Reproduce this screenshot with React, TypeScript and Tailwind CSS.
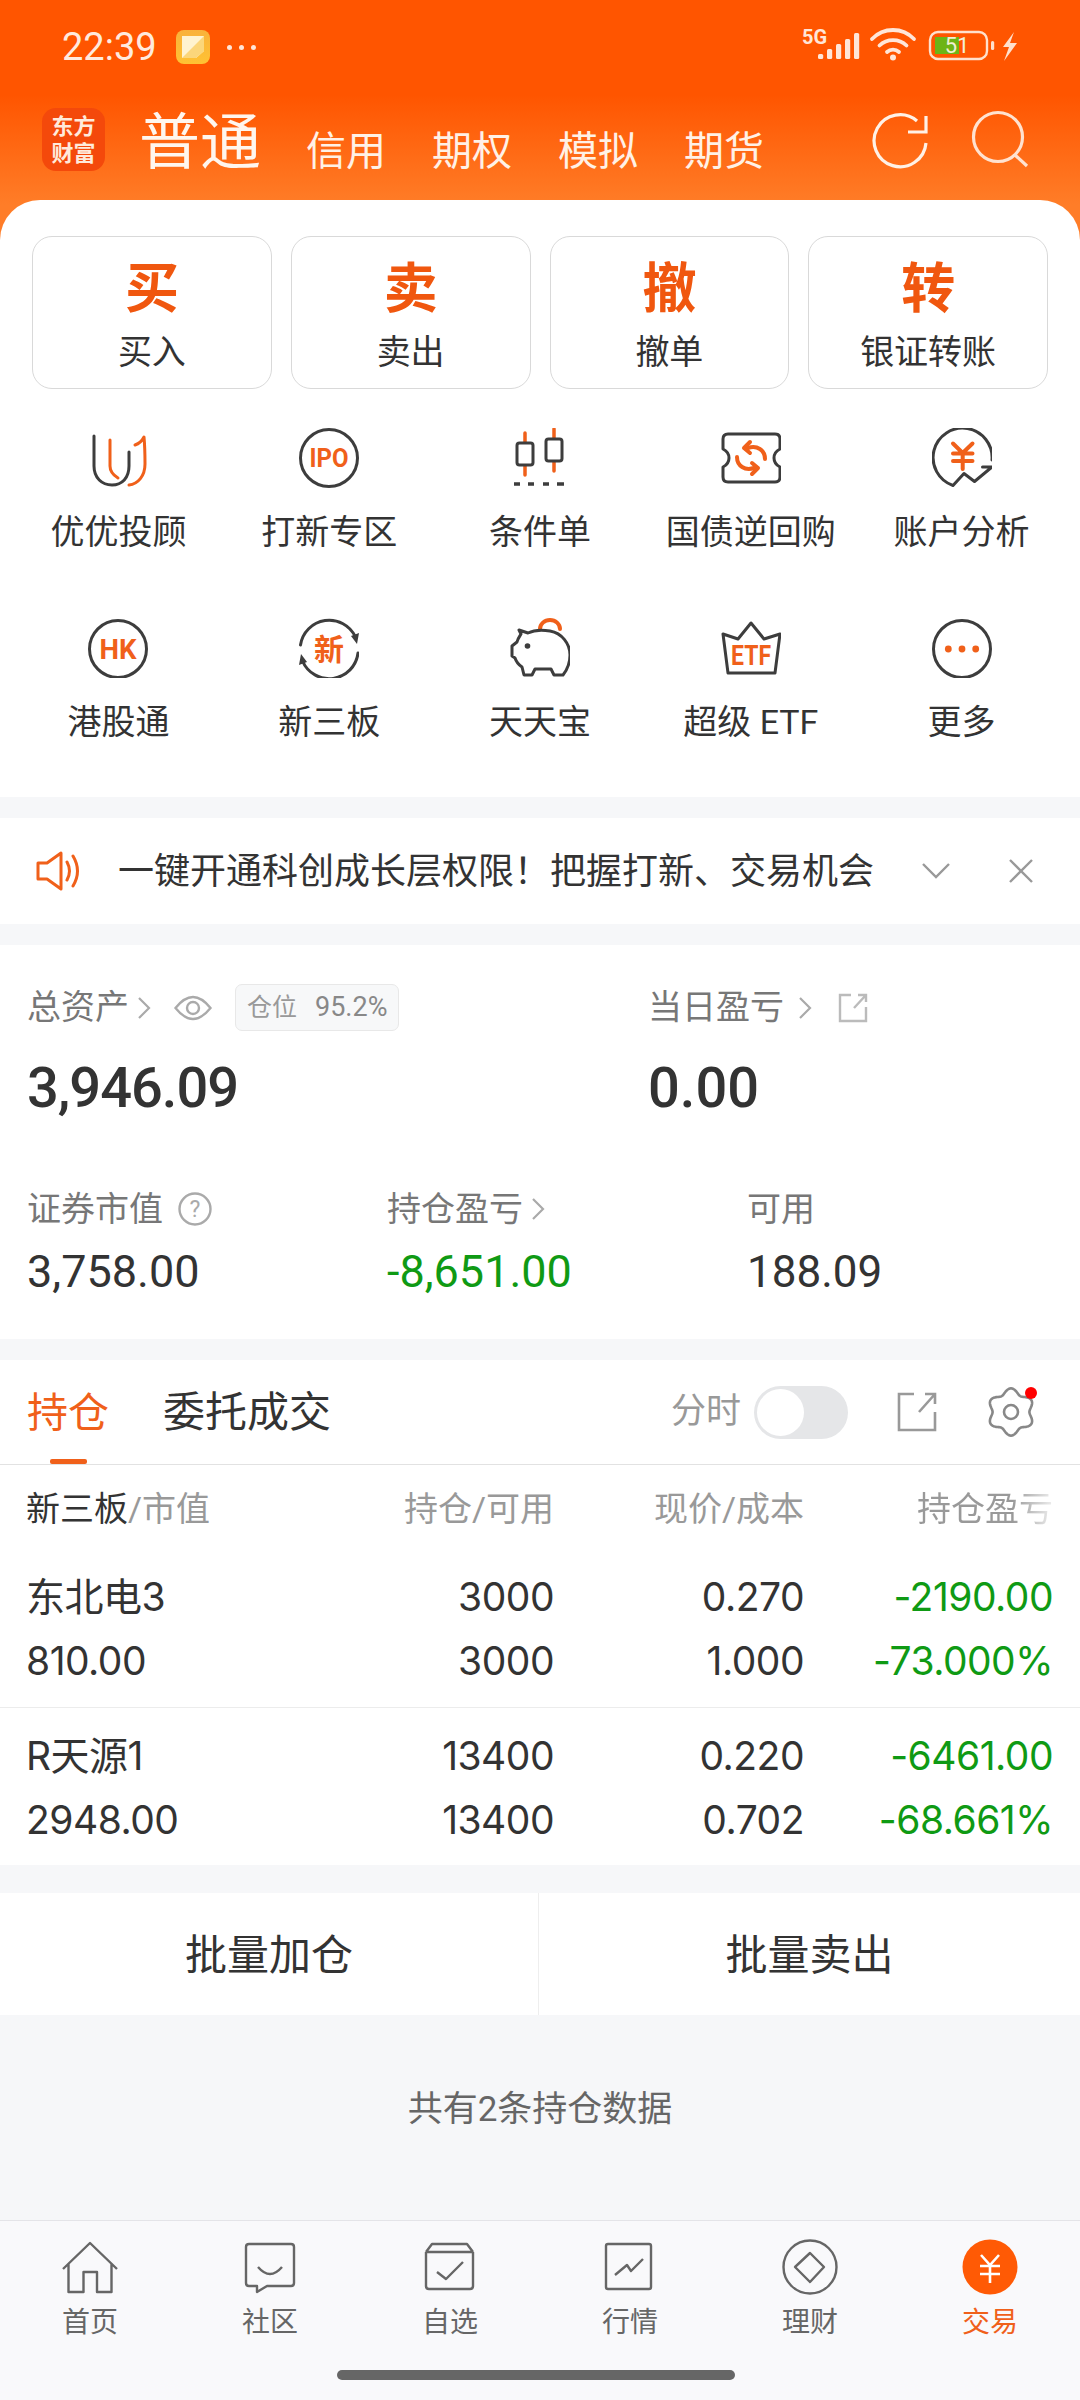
import React from "react";

const DK = "#3d3d3d";
const OR = "#f0601a";

function StatusIcons() {
  return (
    <svg width="220" height="44" viewBox="0 -4 220 44" fill="none">
      <text x="2" y="17" fontSize="20" fontWeight="700" fontFamily="Roboto" fill="#ffe6d8">5G</text>
      {[[18, 27], [27, 22], [36, 17], [45, 12], [54, 6]].map(([x, y]) => (
        <rect key={x} x={x} y={y} width="5.2" height={32 - y} rx="1.5" fill="#ffe6d8" />
      ))}
      <g stroke="#ffe6d8" strokeWidth="3.8" strokeLinecap="round">
        <path d="M72 12 A29 29 0 0 1 114 12" />
        <path d="M79.5 18.5 A19.5 19.5 0 0 1 106.5 18.5" />
        <path d="M87 25 A9 9 0 0 1 99 25" />
      </g>
      <circle cx="93" cy="30.5" r="3" fill="#ffe6d8" />
      <rect x="130" y="5" width="57" height="27" rx="8" stroke="#ffe0cc" strokeWidth="2.4" />
      <rect x="135" y="10" width="24" height="17" fill="#6db416" />
      <rect x="191" y="14" width="3.2" height="9" rx="1.5" fill="#ffe0cc" />
      <text x="157" y="26" fontSize="22" textAnchor="middle" fontFamily="Roboto" fill="#f2f0d4">51</text>
      <path d="M214 5 L203 20 L209 20 L204 34 L217 16 L210 16 Z" fill="#ffe0cc" />
    </svg>
  );
}

function Refresh() {
  return (
    <svg width="60" height="60" viewBox="0 0 60 60" fill="none" stroke="#fff1e6" strokeWidth="3.2">
      <path d="M56 33 A26 26 0 1 1 47 11" />
      <path d="M56 6 V22 H38" />
    </svg>
  );
}
function Search() {
  return (
    <svg width="60" height="60" viewBox="0 0 60 60" fill="none" stroke="#ffe2d0" strokeWidth="3.2">
      <circle cx="28" cy="27" r="24.5" />
      <path d="M45 45 L57 56" />
    </svg>
  );
}

const svgProps = { width: 60, height: 60, viewBox: "0 0 60 60", fill: "none", strokeLinecap: "round" as const, strokeLinejoin: "round" as const, strokeWidth: 3 };

function IconText({ x, y, size, w, children, family = "Roboto" }: { x: number; y: number; size: number; w?: number; children: string; family?: string }) {
  return (
    <text x={x} y={y} fontSize={size} fontWeight="700" fontFamily={family} textAnchor="middle" fill={OR} stroke="none" textLength={w} lengthAdjust={w ? "spacingAndGlyphs" : undefined}>
      {children}
    </text>
  );
}

const tiles: [string, React.ReactNode][] = [
  ["优优投顾", <svg {...svgProps}><path d="M6 8 V38 C6 50 14 57 24 57 C34 57 41 50 41 38 V24" stroke={DK} /><path d="M22 12 V38 C22 43 25 47 30 50 M47 17 C50 16 54 13 56 9 C57 20 57 28 57 36 C57 48 50 56 41 57" stroke={OR} /></svg>],
  ["打新专区", <svg {...svgProps}><circle cx="30" cy="30" r="28.5" stroke={DK} /><IconText x={30} y={39} size={25} w={39}>IPO</IconText></svg>],
  ["条件单", <svg {...svgProps}><path d="M15 5 V47 M44 1 V43" stroke={OR} strokeWidth="3.5" /><rect x="7" y="15" width="16" height="22" rx="2.5" fill="#fff" stroke={DK} /><rect x="36" y="11" width="16" height="22" rx="2.5" fill="#fff" stroke={DK} /><path d="M4 56 H10 M18 56 H24 M33 56 H39 M47 56 H54" stroke={DK} strokeLinecap="butt" strokeWidth="3.4" /></svg>],
  ["国债逆回购", <svg {...svgProps}><path d="M7 6 H54 Q59 6 59 11 V21 Q53 24 53 30 Q53 36 59 39 V49 Q59 54 54 54 H7 Q2 54 2 49 V39 Q8 36 8 30 Q8 24 2 21 V11 Q2 6 7 6 Z" stroke={DK} /><g stroke={OR} strokeWidth="4"><path d="M27 20 C36 17 44 22 44 31" /><path d="M29 14 L23 20 L29 25" /><g transform="rotate(180 30 30)"><path d="M27 20 C36 17 44 22 44 31" /><path d="M29 14 L23 20 L29 25" /></g></g></svg>],
  ["账户分析", <svg {...svgProps}><path d="M60 32 A29.5 29.5 0 1 0 21 57.5 L32 45.5 L42.5 53.5 L60 39 H50.5" stroke={DK} /><path d="M21 15.5 L30.7 25 L40.5 15.5 M21 25.5 H40.5 M21 33 H40.5 M30.7 25 V41" stroke={OR} strokeWidth="4" /></svg>],
  ["港股通", <svg {...svgProps}><circle cx="30" cy="31" r="28.5" stroke={DK} /><IconText x={30} y={41} size={27} w={37}>HK</IconText></svg>],
  ["新三板", <svg {...svgProps}><path d="M1.5 27 A29 29 0 0 1 56.5 19 M59 35 A29 29 0 0 1 3.5 43" stroke={DK} /><path d="M58 26 L52 18 L60 15 Z M2 36 L8 44 L0 47 Z" fill={DK} stroke="none" /><IconText x={30} y={42} size={30} family="Noto Sans CJK SC">新</IconText></svg>],
  ["天天宝", <svg {...svgProps}><path d="M30 11 A10 9 0 0 1 50 11" stroke={OR} strokeWidth="4" /><path d="M9 12 L18 15 C24 12 34 12 40 13 C52 15 60 26 60 37 C60 45 57 52 53 57 H44 L41 51 H25 L22 57 H14 L12 49 C9 47 6 43 5 40 L2 38 V28 L7 24 C8 20 10 18 11 16 Z" stroke={DK} fill="#fff" /><circle cx="17.5" cy="28" r="2.8" fill={DK} /></svg>],
  ["超级ETF", <svg {...svgProps}><path d="M2 16 L17 21 L30 5 L43 21 L59 16 L54 55 H7 Z" stroke={DK} /><IconText x={30} y={47} size={28} w={40}>ETF</IconText></svg>],
  ["更多", <svg {...svgProps}><circle cx="30" cy="31" r="28.5" stroke={DK} /><circle cx="16.3" cy="31" r="3.4" fill={OR} /><circle cx="30" cy="31" r="3.4" fill={OR} /><circle cx="43.7" cy="31" r="3.4" fill={OR} /></svg>],
];

const navProps = { width: 60, height: 60, viewBox: "0 0 60 60", fill: "none", stroke: "#666", strokeWidth: 2.4, strokeLinejoin: "round" as const };
const nav: [string, React.ReactNode, boolean?][] = [
  ["首页", <svg {...navProps}><path d="M3 32 L30 6 L57 32 M8.5 27 V55 H23.5 V35 H37 V55 H51.5 V27" /></svg>],
  ["社区", <svg {...navProps}><path d="M9 7 H51 Q54 7 54 10 V46 Q54 49 51 49 H27 L17 55 V49 H9 Q6 49 6 46 V10 Q6 7 9 7 Z M18 30 Q30 44 42 30" /></svg>],
  ["自选", <svg {...navProps}><path d="M6 15 V49 Q6 52 9 52 H50 Q53 52 53 49 V15 M6 15 H53 M6 15 L12 7 H47 L53 15 M17 35 L26 42 L43 25" /></svg>],
  ["行情", <svg {...navProps}><rect x="6" y="7" width="45" height="45" rx="2" /><path d="M15 38 L27 28 L31 34 L43 22" /></svg>],
  ["理财", <svg {...navProps}><circle cx="30" cy="30" r="26.5" /><path d="M30 16 L44 30 L30 45 L15 30 Z" /></svg>],
  ["交易", <svg width="60" height="60" viewBox="0 0 60 60" fill="none"><circle cx="30" cy="30" r="27.5" fill="#ff5a05" /><path d="M21 18 L30 28 L39 18 M20 29 H40 M20 37 H40 M30 28 V46" stroke="#fff" strokeWidth="2.6" /></svg>, true],
];

function Chevron({ cls = "" }: { cls?: string }) {
  return (
    <svg width="14" height="24" viewBox="0 0 14 24" fill="none" stroke="#aaa" strokeWidth="2.2" className={cls}>
      <path d="M2 2 L12 12 L2 22" />
    </svg>
  );
}

function SmallExternal() {
  return (
    <svg width="30" height="30" viewBox="0 0 30 30" fill="none" stroke="#bbb" strokeWidth="2.4" className="ml-[26px]">
      <path d="M13 2 H2 V28 H28 V14 M28 2 L16 15 M20 2 H28 V9" />
    </svg>
  );
}

function gearPath() {
  const pts: string[] = [];
  for (let i = 0; i <= 120; i++) {
    const t = (i / 120) * Math.PI * 2;
    const r = 21 + 2.6 * Math.cos(6 * t);
    pts.push(`${(24 + r * Math.sin(t)).toFixed(2)} ${(25 - r * Math.cos(t)).toFixed(2)}`);
  }
  return "M" + pts.join(" L") + " Z";
}

function Row({ a, b, c, d, e, f, g, h, last }: { a: string; b: string; c: string; d: string; e: string; f: string; g: string; h: string; last?: boolean }) {
  return (
    <div className={`grid grid-cols-[278px_250px_250px_249px] content-start pl-[26px] pr-[27px] text-[39px] leading-[64px] tracking-[-0.5px] text-[#333] font-['Inter','Noto_Sans_CJK_SC',sans-serif] ${last ? "h-[155px] pt-[16px]" : "h-[158px] pt-[15px] border-b border-[#ececec]"}`}>
      <div>{a}</div>
      <div className="text-right">{b}</div>
      <div className="text-right">{c}</div>
      <div className="text-right text-[#0f9a14]">{d}</div>
      <div>{e}</div>
      <div className="text-right">{f}</div>
      <div className="text-right">{g}</div>
      <div className="text-right text-[#0f9a14]">{h}</div>
    </div>
  );
}

export default function App() {
  return (
    <div className="w-[1080px] h-[2400px] overflow-hidden flex flex-col bg-[#f6f7f9] font-['Roboto','Noto_Sans_CJK_SC',sans-serif] text-[#333]">
      {/* header */}
      <div className="h-[240px] shrink-0 bg-[linear-gradient(180deg,#ff5500_95px,#ff7d28_205px)]">
        <div className="h-[94px] flex items-center pl-[62px] pr-[60px]">
          <span className="text-[38px] leading-none text-[#ffeade]">22:39</span>
          <svg width="34" height="34" viewBox="0 0 34 34" className="ml-[19px]">
            <defs>
              <linearGradient id="nt" x1="0" y1="0" x2="0" y2="1">
                <stop offset="0" stopColor="#f9b13b" />
                <stop offset="1" stopColor="#ffc233" />
              </linearGradient>
            </defs>
            <rect width="34" height="34" rx="8" fill="url(#nt)" />
            <path d="M6 6 H28 V21 L20 28 H6 Z" fill="#fff3d0" />
            <path d="M28 6 V21 L20 28 H6 Z" fill="#fbd67a" />
          </svg>
          <div className="ml-[17px] flex gap-[7px]">
            <span className="w-[5px] h-[5px] rounded-full bg-[#ffe6d8]" />
            <span className="w-[5px] h-[5px] rounded-full bg-[#ffe6d8]" />
            <span className="w-[5px] h-[5px] rounded-full bg-[#ffe6d8]" />
          </div>
          <div className="ml-auto mt-[-4px]">
            <StatusIcons />
          </div>
        </div>
        <div className="flex items-center pl-[42px] pr-[50px] mt-[14px] h-[63px]">
          <div className="w-[63px] h-[63px] rounded-[14px] bg-[#f4490b] flex flex-col items-center justify-center text-[22px] leading-[27px] font-bold text-[#ffeadb]">
            <span>东方</span>
            <span>财富</span>
          </div>
          <span className="ml-[34px] mt-[6px] text-[61px] leading-[70px] text-[#fff6ee]">普通</span>
          <div className="ml-[45px] mt-[24px] flex gap-[46px] text-[40px] leading-[50px] text-[#fff1e6]">
            <span>信用</span>
            <span>期权</span>
            <span>模拟</span>
            <span>期货</span>
          </div>
          <div className="ml-auto flex gap-[40px]">
            <Refresh />
            <Search />
          </div>
        </div>
      </div>

      {/* quick panel */}
      <div className="-mt-[40px] h-[597px] shrink-0 rounded-t-[40px] bg-white pt-[36px]">
        <div className="grid grid-cols-4 gap-[19px] px-[32px]">
          {[["买", "买入"], ["卖", "卖出"], ["撤", "撤单"], ["转", "银证转账"]].map(([t, l]) => (
            <div key={l} className="h-[153px] rounded-[20px] border border-[#d9d9d9] flex flex-col items-center">
              <span className="mt-[22px] text-[54px] leading-[62px] font-bold text-[#f0570f]">{t}</span>
              <span className="mt-[11px] text-[34px] leading-[40px] text-[#333]">{l}</span>
            </div>
          ))}
        </div>
        <div className="grid grid-cols-5 gap-y-[68px] px-[13px] mt-[39px]">
          {tiles.map(([l, icon]) => (
            <div key={l} className="h-[122px] flex flex-col items-center">
              <div className="w-[60px] h-[60px]">{icon}</div>
              <span className="mt-[24px] text-[34px] leading-[40px] text-[#333] whitespace-nowrap">{l === "超级ETF" ? "超级 ETF" : l}</span>
            </div>
          ))}
        </div>
      </div>

      {/* notice */}
      <div className="mt-[21px] h-[106px] shrink-0 bg-white flex items-center pl-[36px]">
        <svg width="46" height="40" viewBox="0 0 46 40" fill="none" stroke={OR} strokeWidth="3" strokeLinejoin="round" strokeLinecap="round">
          <path d="M2 12 H11 L25 2 V38 L11 28 H2 Z" />
          <path d="M31 11 Q36 20 31 29 M37 5 Q46 20 37 35" />
        </svg>
        <span className="ml-[36px] mt-[2px] text-[36px] leading-[44px] text-[#333] whitespace-nowrap">一键开通科创成长层权限！把握打新、交易机会</span>
        <svg width="28" height="16" viewBox="0 0 28 16" fill="none" stroke="#999" strokeWidth="2.4" className="ml-[48px]">
          <path d="M1 1 L14 14 L27 1" />
        </svg>
        <svg width="24" height="24" viewBox="0 0 24 24" fill="none" stroke="#999" strokeWidth="2.4" className="ml-[59px]">
          <path d="M1 1 L23 23 M23 1 L1 23" />
        </svg>
      </div>

      {/* stats */}
      <div className="mt-[21px] h-[394px] shrink-0 bg-white px-[27px] pt-[39px]">
        <div className="grid grid-cols-[621px_1fr]">
          <div>
            <div className="h-[47px] flex items-center text-[34px] text-[#777]">
              <span>总资产</span>
              <Chevron cls="ml-[8px]" />
              <svg width="38" height="26" viewBox="0 0 38 26" fill="none" stroke="#aaa" strokeWidth="2.4" className="ml-[23px]">
                <path d="M1.5 13 Q19 -9 36.5 13 Q19 35 1.5 13 Z" />
                <circle cx="19" cy="13" r="6" />
              </svg>
              <div className="ml-[23px] w-[164px] h-[47px] rounded-[7px] border border-[#e8e8e8] bg-[#f7f8f9] flex items-center pl-[11px] text-[25px] text-[#999]">
                <span>仓位</span>
                <span className="ml-[18px] text-[27px] text-[#888]">95.2%</span>
              </div>
            </div>
            <div className="mt-[25px] text-[56px] leading-[64px] font-medium tracking-[-1px]">3,946.09</div>
          </div>
          <div>
            <div className="h-[47px] flex items-center text-[34px] text-[#777]">
              <span>当日盈亏</span>
              <Chevron cls="ml-[14px]" />
              <SmallExternal />
            </div>
            <div className="mt-[25px] text-[56px] leading-[64px] font-medium">0.00</div>
          </div>
        </div>
        <div className="grid grid-cols-[360px_360px_1fr] mt-[69px]">
          <div>
            <div className="h-[40px] flex items-center text-[34px] text-[#777]">
              <span>证券市值</span>
              <svg width="34" height="34" viewBox="0 0 34 34" fill="none" className="ml-[15px]">
                <circle cx="17" cy="17" r="15.5" stroke="#aaa" strokeWidth="2.4" />
                <text x="17" y="25" fontSize="23" textAnchor="middle" fontFamily="Roboto" fill="#aaa">?</text>
              </svg>
            </div>
            <div className="mt-[18px] text-[45px] leading-[50px]">3,758.00</div>
          </div>
          <div>
            <div className="h-[40px] flex items-center text-[34px] text-[#777]">
              <span>持仓盈亏</span>
              <Chevron cls="ml-[8px]" />
            </div>
            <div className="mt-[18px] text-[45px] leading-[50px] text-[#0f9a14]">-8,651.00</div>
          </div>
          <div>
            <div className="h-[40px] flex items-center text-[34px] text-[#777]">可用</div>
            <div className="mt-[18px] text-[44px] leading-[50px]">188.09</div>
          </div>
        </div>
      </div>

      {/* holdings */}
      <div className="mt-[21px] h-[505px] shrink-0 bg-white">
        <div className="relative h-[105px] border-b border-[#e2e2e2] flex items-center pl-[27px] pr-[43px]">
          <span className="mt-[2px] text-[41px] leading-[50px] text-[#f0601a]">持仓</span>
          <span className="ml-[54px] mt-[2px] text-[42px] leading-[50px] text-[#333]">委托成交</span>
          <span className="ml-auto text-[35px] leading-[40px] text-[#999]">分时</span>
          <div className="ml-[13px] w-[94px] h-[53px] rounded-full bg-[#e5e6e8] flex items-center pl-[3px]">
            <div className="w-[47px] h-[47px] rounded-full bg-white" />
          </div>
          <svg width="40" height="40" viewBox="0 0 40 40" fill="none" stroke="#999" strokeWidth="2.6" className="ml-[49px]">
            <path d="M17 2 H2 V38 H38 V20 M38 2 L22 20 M28 2 H38 V12" />
          </svg>
          <svg width="50" height="50" viewBox="0 0 50 50" fill="none" className="ml-[50px]">
            <path d={gearPath()} stroke="#888" strokeWidth="2.6" strokeLinejoin="round" />
            <circle cx="24" cy="25" r="7" stroke="#888" strokeWidth="2.6" />
            <circle cx="44" cy="6" r="6" fill="#f00" />
          </svg>
          <div className="absolute left-[50px] bottom-0 w-[37px] h-[5px] rounded-[2px] bg-[#f0601a]" />
        </div>
        <div className="grid grid-cols-[278px_250px_250px_249px] pl-[26px] pr-[27px] pt-[3px] h-[85px] items-center text-[34px] text-[#999]">
          <div>
            <span className="text-[#333]">新三板</span>/市值
          </div>
          <div className="text-right">持仓/可用</div>
          <div className="text-right">现价/成本</div>
          <div className="text-right">
            <span className="bg-[linear-gradient(90deg,#999_70%,#eeeeee_100%)] bg-clip-text text-transparent">持仓盈亏</span>
          </div>
        </div>
        <Row a="东北电3" b="3000" c="0.270" d="-2190.00" e="810.00" f="3000" g="1.000" h="-73.000%" />
        <Row last a="R天源1" b="13400" c="0.220" d="-6461.00" e="2948.00" f="13400" g="0.702" h="-68.661%" />
      </div>

      {/* bulk */}
      <div className="mt-[28px] h-[122px] shrink-0 bg-white flex text-[42px] text-[#333]">
        <div className="w-[539px] border-r border-[#eeeeee] flex items-center justify-center pt-[3px]">批量加仓</div>
        <div className="flex-1 flex items-center justify-center pt-[3px]">批量卖出</div>
      </div>

      <div className="pt-[74px] text-center text-[35px] leading-[42px] text-[#666]">共有2条持仓数据</div>

      {/* footer */}
      <div className="mt-auto h-[180px] shrink-0 bg-[#f9f9fb] border-t border-[#e4e4e8] flex flex-col items-center pt-[16px]">
        <div className="w-full grid grid-cols-6">
          {nav.map(([l, icon, active]) => (
            <div key={l} className="flex flex-col items-center">
              <div className="w-[60px] h-[60px]">{icon}</div>
              <span className={`mt-[8px] text-[28px] leading-[36px] ${active ? "text-[#f0601a]" : "text-[#666]"}`}>{l}</span>
            </div>
          ))}
        </div>
        <div className="mt-[29px] mr-[8px] w-[398px] h-[10px] rounded-full bg-[#666]" />
      </div>
    </div>
  );
}
